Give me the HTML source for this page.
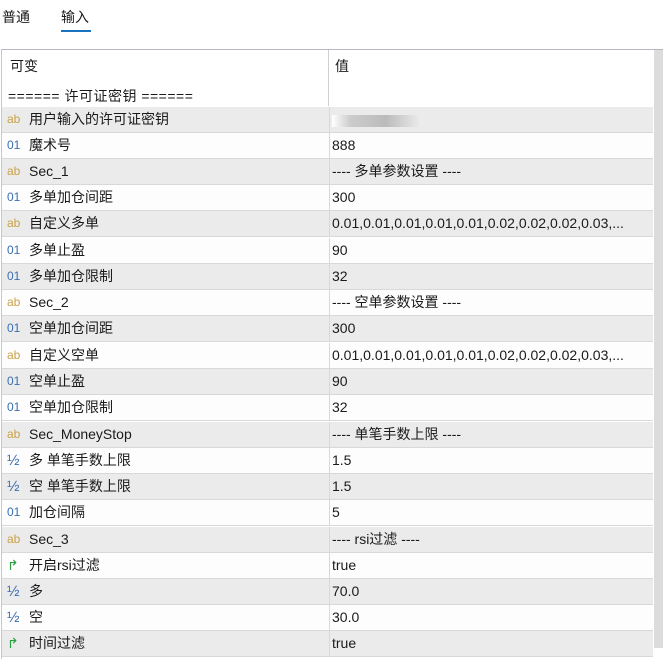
<!DOCTYPE html>
<html><head><meta charset="utf-8"><style>
*{margin:0;padding:0;box-sizing:border-box}
body{width:663px;height:648px;overflow:hidden;background:#fff;font-family:"Liberation Sans","Noto Sans CJK SC",sans-serif;font-size:14px;color:#1a1a1a;position:relative}
.tab{position:absolute;top:7px;font-size:14px}
.ul{position:absolute;left:61px;top:30px;width:30px;height:2px;background:#1a73c0}
.frame{position:absolute;left:1px;top:49px;width:662px;height:610px;border-top:1px solid #b8b8c0;border-left:1px solid #c8c8c8}
.div{position:absolute;left:328px;top:50px;width:1px;height:56px;background:#d0d0d0}
.row{position:absolute;left:2px;width:651px;height:26px;border-bottom:1px solid #d8d8d8}
.g{background:#ebebeb}
.w{background:#fdfdfd}
.row span{position:absolute;top:0;line-height:25px;white-space:nowrap}
.ic{left:5px;font-size:12px}
.ab{color:#c9a24a}.n{color:#3a6fb0}.h{color:#3a6fb0;font-size:15px!important}.b{color:#2aa040;font-size:14px!important}
.nm{left:27px}
.v{left:330px}
.sb{position:absolute;left:654px;top:50px;width:9px;height:598px;background:#dcdcdc}
.rd{position:absolute;left:327px;top:0;width:1px;height:26px;background:#d8d8d8}
</style></head><body>
<div class="tab" style="left:2px">普通</div>
<div class="tab" style="left:61px">输入</div>
<div class="ul"></div>
<div class="frame"></div>
<div class="div"></div>
<div style="position:absolute;left:10px;top:56px">可变</div>
<div style="position:absolute;left:335px;top:56px">值</div>
<div style="position:absolute;left:8px;top:86px;letter-spacing:0.5px">====== 许可证密钥 ======</div>
<div class="sb"></div>
<div class="row g" style="top:107px"><div class="rd"></div><span class="ic ab">ab</span><span class="nm">用户输入的许可证密钥</span><span class="v" style="top:8px;width:90px;height:12px;background:linear-gradient(90deg,#fff,#ccc 20%,#bbb 60%,#eee)"></span></div>
<div class="row w" style="top:133px"><div class="rd"></div><span class="ic n">01</span><span class="nm">魔术号</span><span class="v">888</span></div>
<div class="row g" style="top:159px"><div class="rd"></div><span class="ic ab">ab</span><span class="nm">Sec_1</span><span class="v">---- 多单参数设置 ----</span></div>
<div class="row w" style="top:185px"><div class="rd"></div><span class="ic n">01</span><span class="nm">多单加仓间距</span><span class="v">300</span></div>
<div class="row g" style="top:211px"><div class="rd"></div><span class="ic ab">ab</span><span class="nm">自定义多单</span><span class="v">0.01,0.01,0.01,0.01,0.01,0.02,0.02,0.02,0.03,...</span></div>
<div class="row w" style="top:238px"><div class="rd"></div><span class="ic n">01</span><span class="nm">多单止盈</span><span class="v">90</span></div>
<div class="row g" style="top:264px"><div class="rd"></div><span class="ic n">01</span><span class="nm">多单加仓限制</span><span class="v">32</span></div>
<div class="row w" style="top:290px"><div class="rd"></div><span class="ic ab">ab</span><span class="nm">Sec_2</span><span class="v">---- 空单参数设置 ----</span></div>
<div class="row g" style="top:316px"><div class="rd"></div><span class="ic n">01</span><span class="nm">空单加仓间距</span><span class="v">300</span></div>
<div class="row w" style="top:343px"><div class="rd"></div><span class="ic ab">ab</span><span class="nm">自定义空单</span><span class="v">0.01,0.01,0.01,0.01,0.01,0.02,0.02,0.02,0.03,...</span></div>
<div class="row g" style="top:369px"><div class="rd"></div><span class="ic n">01</span><span class="nm">空单止盈</span><span class="v">90</span></div>
<div class="row w" style="top:395px"><div class="rd"></div><span class="ic n">01</span><span class="nm">空单加仓限制</span><span class="v">32</span></div>
<div class="row g" style="top:422px"><div class="rd"></div><span class="ic ab">ab</span><span class="nm">Sec_MoneyStop</span><span class="v">---- 单笔手数上限 ----</span></div>
<div class="row w" style="top:448px"><div class="rd"></div><span class="ic h">½</span><span class="nm">多 单笔手数上限</span><span class="v">1.5</span></div>
<div class="row g" style="top:474px"><div class="rd"></div><span class="ic h">½</span><span class="nm">空 单笔手数上限</span><span class="v">1.5</span></div>
<div class="row w" style="top:500px"><div class="rd"></div><span class="ic n">01</span><span class="nm">加仓间隔</span><span class="v">5</span></div>
<div class="row g" style="top:527px"><div class="rd"></div><span class="ic ab">ab</span><span class="nm">Sec_3</span><span class="v">---- rsi过滤 ----</span></div>
<div class="row w" style="top:553px"><div class="rd"></div><span class="ic b">↱</span><span class="nm">开启rsi过滤</span><span class="v">true</span></div>
<div class="row g" style="top:579px"><div class="rd"></div><span class="ic h">½</span><span class="nm">多</span><span class="v">70.0</span></div>
<div class="row w" style="top:605px"><div class="rd"></div><span class="ic h">½</span><span class="nm">空</span><span class="v">30.0</span></div>
<div class="row g" style="top:631px"><div class="rd"></div><span class="ic b">↱</span><span class="nm">时间过滤</span><span class="v">true</span></div>
</body></html>
